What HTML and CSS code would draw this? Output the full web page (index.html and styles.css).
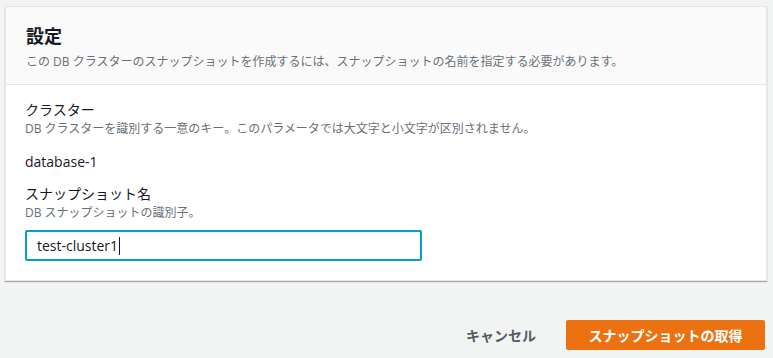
FILE: index.html
```html
<!doctype html>
<html lang="ja">
    <head>
        <meta charset="utf-8">
        <title>設定</title>
        <link rel="stylesheet" href="styles.css">
    </head>

    <body>
        <div class = "Panel">
            <div class = "Head">
                <h2>設定</h2>
                <p class = "Desc">この DB クラスターのスナップショットを作成するには、スナップショットの名前を指定する必要があります。</p>
            </div>

            <div class = "Body">
                <div class = "Field">
                    <div class = "Label">クラスター</div>
                    <div class = "Desc">DB クラスターを識別する一意のキー。このパラメータでは大文字と小文字が区別されません。</div>
                    <div class = "Value">database-1</div>
                </div>

                <div class = "Field">
                    <div class = "Label">スナップショット名</div>
                    <div class = "Desc">DB スナップショットの識別子。</div>
                    <div class = "Input">test-cluster1<span class = "Caret"></span></div>
                </div>
            </div>
        </div>

        <div class = "Actions">
            <button class = "Cancel">キャンセル</button>
            <button class = "Primary">スナップショットの取得</button>
        </div>
    </body>
</html>
```

FILE: styles.css
```css
html{
    font-size: 100%;
    font-family: 'Open Sans', 'Noto Sans CJK JP', sans-serif;
}
body{
    margin: 0;
    padding: 6px 8px 0 5px;
    background: #f2f3f3;
    color: #16191f;
}
.Panel{
    width: 760px;
    background: white;
    border: 1px solid #e4e6e6;
    box-shadow: 0 1px 1px rgba(0, 0, 0, 0.3);
}
.Head{
    height: 78px;
    box-sizing: border-box;
    padding: 17px 20px 0 20px;
    background: #fafafa;
    border-bottom: 1px solid #e4e6e6;
}
h2{
    margin: 0;
    font-size: 18px;
    font-weight: bold;
    line-height: 24px;
}
.Desc{
    margin: 0;
    font-size: 12px;
    line-height: 18px;
    color: #687078;
}
.Head .Desc{
    margin-top: 5px;
}
.Body{
    padding: 15px 20px 19px 19px;
}
.Field + .Field{
    margin-top: 12px;
}
.Label{
    font-size: 14px;
    line-height: 20px;
}
.Value{
    margin-top: 14px;
    font-size: 14px;
    line-height: 20px;
}
.Input{
    margin-top: 8px;
    width: 397px;
    height: 31px;
    box-sizing: border-box;
    padding: 0 10px;
    border: 2px solid #00a1c9;
    border-radius: 2px;
    font-size: 14px;
    line-height: 27px;
    display: flex;
    align-items: center;
}
.Caret{
    display: inline-block;
    width: 1px;
    height: 18px;
    margin-left: 1px;
    background: #16191f;
}
.Actions{
    display: flex;
    justify-content: flex-end;
    align-items: center;
    gap: 30px;
    margin-top: 39px;
    width: 760px;
}
button{
    font-family: 'Open Sans', 'Noto Sans CJK JP', sans-serif;
    font-size: 14px;
    font-weight: bold;
    border: none;
    cursor: pointer;
}
.Cancel{
    background: none;
    color: #545b64;
    padding: 4px 0;
}
.Primary{
    width: 199px;
    height: 30px;
    background: #ec7211;
    color: white;
    border-radius: 2px;
}
```
